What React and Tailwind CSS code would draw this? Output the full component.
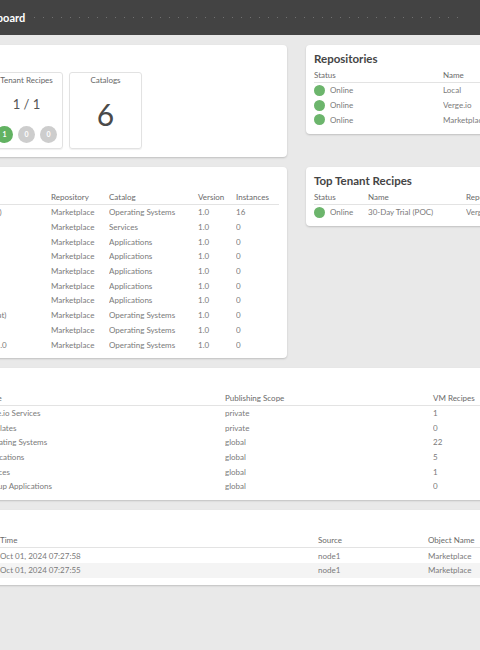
import React from "react";

const dot = "inline-block w-[11px] h-[11px] rounded-full bg-[#6cb56c] shrink-0";

const Card = ({ title, className = "", children }) => (
  <div className={`bg-white rounded-[4px] shadow-[0_1px_2px_rgba(0,0,0,0.18)] px-[8px] pt-[6px] ${className}`}>
    <div className="h-[17px] leading-[16px] text-[11.5px] font-bold text-[#454545] whitespace-nowrap">{title}</div>
    {children}
  </div>
);

const Table = ({ cols, head, rows, striped = false, step = "h-[14.7px]" }) => (
  <div>
    <div className={`grid ${cols} h-[15px] items-center border-b border-[#e3e3e3] text-[#6a6a6a]`}>
      {head.map((h, i) => (
        <div key={i} className="whitespace-nowrap">{h}</div>
      ))}
    </div>
    {rows.map((r, ri) => (
      <div
        key={ri}
        className={`grid ${cols} ${step} items-center text-[#7a7a7a] ${striped && ri % 2 === 1 ? "bg-[#f4f4f4]" : ""}`}
      >
        {r.map((c, ci) => (
          <div key={ci} className="whitespace-nowrap overflow-hidden">{c}</div>
        ))}
      </div>
    ))}
  </div>
);

const Online = () => (
  <span className="flex items-center gap-[5px]">
    <span className={dot}></span>Online
  </span>
);

const StatBox = ({ label, children }) => (
  <div className="w-[73px] h-[77px] border border-[#e2e2e2] rounded-[3px] shadow-[0_1px_1px_rgba(0,0,0,0.06)] flex flex-col items-center shrink-0">
    <div className="pt-[2px] leading-[10px] text-[8px] text-[#666] whitespace-nowrap">{label}</div>
    {children}
  </div>
);

const Pill = ({ n, green }) => (
  <span
    className={`w-[17px] h-[17px] rounded-full flex items-center justify-center text-[7px] font-bold text-white ${green ? "bg-[#62b262]" : "bg-[#cdcdcd]"}`}
  >
    {n}
  </span>
);

const recipes = [
  ["Ubuntu Server 24.04.1 LTS Desktop (ssh)", "Marketplace", "Operating Systems", "1.0", "16"],
  ["Verge.io Tenant Node", "Marketplace", "Services", "1.0", "0"],
  ["Nextcloud", "Marketplace", "Applications", "1.0", "0"],
  ["WordPress", "Marketplace", "Applications", "1.0", "0"],
  ["GitLab CE", "Marketplace", "Applications", "1.0", "0"],
  ["Zabbix", "Marketplace", "Applications", "1.0", "0"],
  ["Grafana", "Marketplace", "Applications", "1.0", "0"],
  ["Windows Server 2022 Cores (Eval Format)", "Marketplace", "Operating Systems", "1.0", "0"],
  ["Debian 12", "Marketplace", "Operating Systems", "1.0", "0"],
  ["Rocky Linux 9.4 Minimal Docker Host v1.0", "Marketplace", "Operating Systems", "1.0", "0"],
];

const catalogs = [
  ["Verge.io", "Verge.io Services", "private", "1", ""],
  ["Local", "Templates", "private", "0", ""],
  ["Marketplace", "Operating Systems", "global", "22", ""],
  ["Marketplace", "Applications", "global", "5", ""],
  ["Marketplace", "Services", "global", "1", ""],
  ["Marketplace", "Backup Applications", "global", "0", ""],
];

export default function App() {
  return (
    <div className="w-[480px] h-[650px] overflow-hidden bg-[#e9e9e9] font-['Lato','Liberation_Sans',sans-serif] text-[8px]">
      <div className="-ml-[150px] w-[760px]">
        <div className="h-[35px] bg-[#434343] flex items-center pl-[122px]">
          <span className="text-[11px] font-bold text-white leading-none">Dashboard</span>
          <span className="ml-[9px] w-[427px] h-px bg-[repeating-linear-gradient(90deg,#707070_0_1px,transparent_1px_9px)]"></span>
        </div>

        <div className="grid grid-cols-[437px_300px] gap-x-[19px] gap-y-[10px] items-start pt-[10px]">
          <Card title="Summary" className="pb-[8px]">
            <div className="flex gap-[6px] mt-[4px] ml-[53px]">
              <StatBox label="VM Recipes">
                <div className="mt-[11px] text-[13px] leading-[16px] text-[#555]">28 / 28</div>
              </StatBox>
              <StatBox label="Tenant Recipes">
                <div className="mt-[11px] text-[13px] leading-[16px] text-[#555]">1 / 1</div>
                <div className="flex gap-[5px] mt-[14px]">
                  <Pill n="1" green />
                  <Pill n="0" />
                  <Pill n="0" />
                </div>
              </StatBox>
              <StatBox label="Catalogs">
                <div className="flex-1 flex items-center justify-center pb-[6px] text-[30px] leading-none text-[#4a4a4a]">6</div>
              </StatBox>
            </div>
          </Card>

          <Card title="Repositories" className="pb-[7px]">
            <Table
              cols="grid-cols-[129px_97px_66px]"
              head={["Status", "Name", "Type"]}
              rows={[
                [<Online />, "Local", "local"],
                [<Online />, "Verge.io", "remote"],
                [<Online />, "Marketplace", "remote"],
              ]}
            />
          </Card>

          <Card title="Top VM Recipes" className="pb-[6px]">
            <Table
              cols="grid-cols-[193px_58px_89px_38px_43px]"
              head={["Name", "Repository", "Catalog", "Version", "Instances"]}
              rows={recipes}
            />
          </Card>

          <Card title="Top Tenant Recipes" className="pb-[6px]">
            <Table
              cols="grid-cols-[54px_98px_70px_62px]"
              head={["Status", "Name", "Repository", "Instances"]}
              rows={[[<Online />, "30-Day Trial (POC)", "Verge.io", "1"]]}
            />
          </Card>

          <Card title="Catalogs" className="col-span-2 pb-[7px]">
            <Table
              cols="grid-cols-[123px_244px_208px_90px_75px]"
              head={["Repository", "Name", "Publishing Scope", "VM Recipes", "Tenant Recipes"]}
              rows={catalogs}
              step="h-[14.6px]"
            />
          </Card>

          <Card title="Logs" className="col-span-2 pb-[7px]">
            <Table
              cols="grid-cols-[142px_318px_110px_170px]"
              head={["Level", "Time", "Source", "Object Name"]}
              striped
              rows={[
                ["message", "Oct 01, 2024 07:27:58", "node1", "Marketplace"],
                ["message", "Oct 01, 2024 07:27:55", "node1", "Marketplace"],
              ]}
            />
          </Card>
        </div>
      </div>
    </div>
  );
}
